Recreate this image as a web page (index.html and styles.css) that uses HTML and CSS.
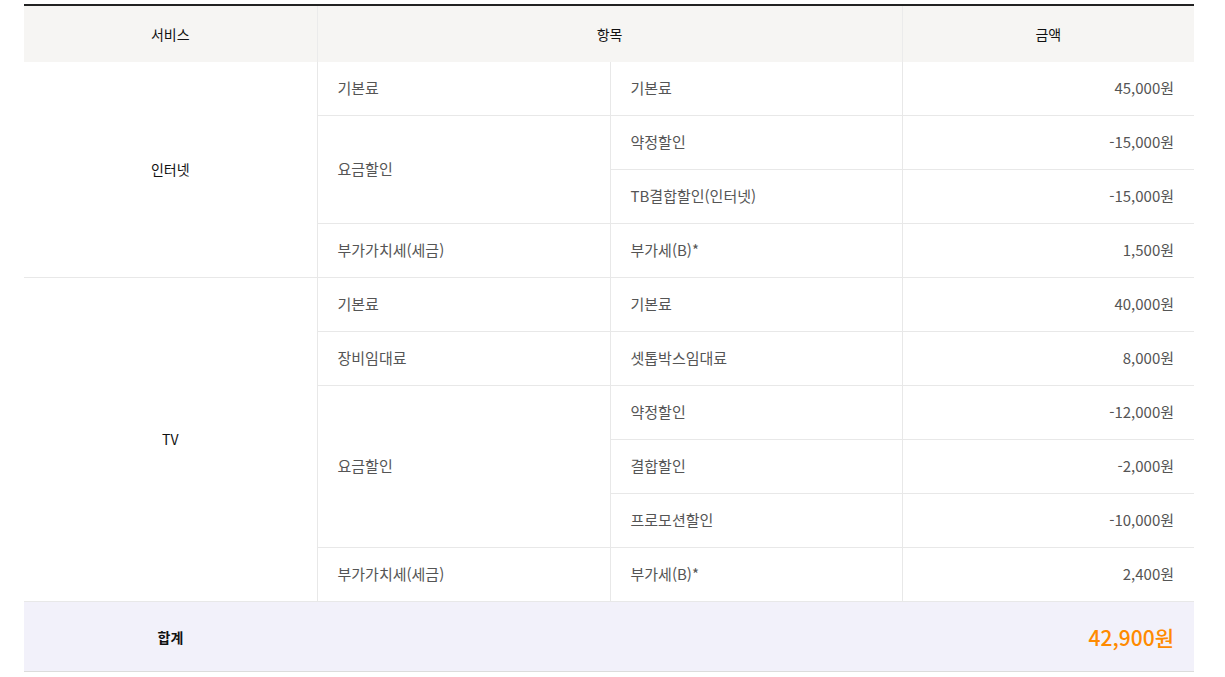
FILE: index.html
```html
<!DOCTYPE html>
<html lang="ko">
<head>
<meta charset="utf-8">
<link rel="stylesheet" href="styles.css">
</head>
<body>
<div class="wrap">
<table class="bill">
  <colgroup>
    <col class="c1"><col class="c2"><col class="c3"><col class="c4">
  </colgroup>
  <thead>
    <tr>
      <th>서비스</th>
      <th colspan="2">항목</th>
      <th>금액</th>
    </tr>
  </thead>
  <tbody>
    <tr>
      <td class="svc" rowspan="4">인터넷</td>
      <td>기본료</td><td>기본료</td><td class="amt">45,000원</td>
    </tr>
    <tr>
      <td rowspan="2">요금할인</td><td>약정할인</td><td class="amt">-15,000원</td>
    </tr>
    <tr>
      <td>TB결합할인(인터넷)</td><td class="amt">-15,000원</td>
    </tr>
    <tr>
      <td>부가가치세(세금)</td><td>부가세(B)*</td><td class="amt">1,500원</td>
    </tr>
    <tr>
      <td class="svc" rowspan="6">TV</td>
      <td>기본료</td><td>기본료</td><td class="amt">40,000원</td>
    </tr>
    <tr>
      <td>장비임대료</td><td>셋톱박스임대료</td><td class="amt">8,000원</td>
    </tr>
    <tr>
      <td rowspan="3">요금할인</td><td>약정할인</td><td class="amt">-12,000원</td>
    </tr>
    <tr>
      <td>결합할인</td><td class="amt">-2,000원</td>
    </tr>
    <tr>
      <td>프로모션할인</td><td class="amt">-10,000원</td>
    </tr>
    <tr>
      <td>부가가치세(세금)</td><td>부가세(B)*</td><td class="amt">2,400원</td>
    </tr>
  </tbody>
  <tfoot>
    <tr>
      <th class="total-label">합계</th>
      <td class="total-amt" colspan="3">42,900원</td>
    </tr>
  </tfoot>
</table>
</div>
</body>
</html>
```

FILE: styles.css
```css
html, body {
  margin: 0;
  padding: 0;
  background: #fff;
}
body {
  font-family: "Noto Sans CJK KR", "Noto Sans", sans-serif;
  font-size: 14px;
}
.wrap {
  padding: 4px 0 0 24px;
}
.bill {
  width: 1170px;
  border-collapse: collapse;
  table-layout: fixed;
  border-top: 2px solid #222;
}
.c1, .c2 { width: 293px; }
.c3, .c4 { width: 292px; }
.bill thead th {
  height: 56px;
  padding: 0;
  background: #f6f5f3;
  font-weight: 400;
  color: #111;
  text-align: center;
  border-left: 1px solid #ebebeb;
}
.bill thead th:first-child { border-left: 0; }
.bill tbody td {
  height: 51px;
  padding: 0 20px 2px;
  color: #555;
  font-size: 15px;
  border-bottom: 1px solid #e8e8e8;
  border-left: 1px solid #e8e8e8;
  line-height: 20px;
}
.bill tbody td.svc {
  border-left: 0;
  text-align: center;
  color: #111;
  font-size: 14px;
}
.bill tbody td.amt {
  text-align: right;
}
.bill tfoot tr {
  background: #f2f1fa;
  border-bottom: 1px solid #dcdcdc;
}
.bill tfoot th, .bill tfoot td {
  height: 69px;
  padding: 0 20px;
}
.total-label {
  text-align: center;
  font-weight: 700;
  color: #111;
}
.total-amt {
  text-align: right;
  color: #ff8a00;
  font-size: 21px;
  font-weight: 500;
}
```
